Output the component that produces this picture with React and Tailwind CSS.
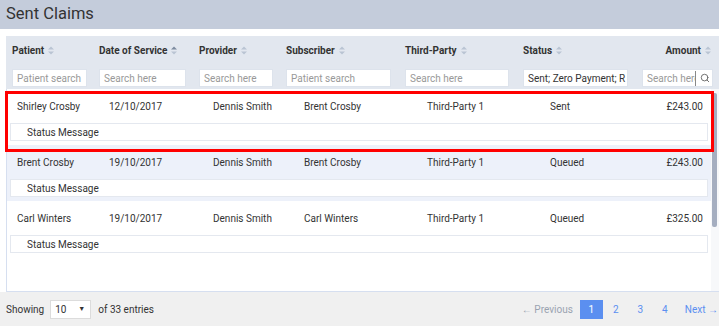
import { Search } from "lucide-react";

const SortIcon = ({ active = false }) => (
  <svg width="6" height="9" viewBox="0 0 6 9" className="ml-[4px] inline-block">
    <path d="M0 3.5 L3 0.5 L6 3.5 Z" fill={active ? "#7d8ba0" : "#b9c4d3"} />
    <path d="M0 5.5 L3 8.5 L6 5.5 Z" fill="#b9c4d3" />
  </svg>
);

const columns = [
  { label: "Patient", w: "w-[87px]", input: "w-[75px]", placeholder: "Patient search" },
  { label: "Date of Service", w: "w-[100px]", input: "w-[87px]", placeholder: "Search here", active: true },
  { label: "Provider", w: "w-[87px]", input: "w-[74px]", placeholder: "Search here" },
  { label: "Subscriber", w: "w-[119px]", input: "w-[105px]", placeholder: "Patient search" },
  { label: "Third-Party", w: "w-[118px]", input: "w-[104px]", placeholder: "Search here" },
  { label: "Status", w: "w-[119px]", input: "w-[105px]", value: "Sent; Zero Payment; R" },
];

const claims = [
  { patient: "Shirley Crosby", date: "12/10/2017", provider: "Dennis Smith", subscriber: "Brent Crosby", party: "Third-Party 1", status: "Sent", amount: "£243.00" },
  { patient: "Brent Crosby", date: "19/10/2017", provider: "Dennis Smith", subscriber: "Brent Crosby", party: "Third-Party 1", status: "Queued", amount: "£243.00", shaded: true },
  { patient: "Carl Winters", date: "19/10/2017", provider: "Dennis Smith", subscriber: "Carl Winters", party: "Third-Party 1", status: "Queued", amount: "£325.00" },
];

const ClaimRow = ({ c }) => (
  <div className={`h-[56px] pt-[10px] ${c.shaded ? "bg-[#edf1fa]" : "bg-white"}`}>
    <div className="flex h-[14px] items-center pl-[10px] pr-[8px]">
      <span className="w-[92px]">{c.patient}</span>
      <span className="w-[104px]">{c.date}</span>
      <span className="w-[91px]">{c.provider}</span>
      <span className="w-[123px]">{c.subscriber}</span>
      <span className="w-[123px]">{c.party}</span>
      <span className="w-[80px]">{c.status}</span>
      <span className="flex-1 text-right">{c.amount}</span>
    </div>
    <div className="mx-[3px] mt-[10px] flex h-[18px] items-center border border-[#e4e8ef] bg-white pl-[16px]">
      Status Message
    </div>
  </div>
);

const App = () => {
  return (
    <div
      className="relative h-[326px] w-[719px] overflow-hidden bg-white text-[10px] text-[#333]"
      style={{ fontFamily: "Roboto, 'Liberation Sans', sans-serif" }}
    >
      {/* Title bar */}
      <div className="flex h-[29px] items-center bg-[#c4ccdb] px-[6px]">
        <h1 className="text-[16.5px] leading-none text-[#333]">Sent Claims</h1>
      </div>

      <div className="flex h-[263px] flex-col pl-[6px] pt-[7px]">
        {/* Column headers + filters */}
        <div className="h-[53px] bg-[#e2e7ef] pl-[6px] pt-[7px]">
          <div className="flex h-[14px] items-center font-bold">
            {columns.map((col) => (
              <div key={col.label} className={`${col.w} flex items-center`}>
                {col.label}
                <SortIcon active={col.active} />
              </div>
            ))}
            <div className="flex w-[69px] items-center justify-end">
              Amount
              <SortIcon />
            </div>
          </div>
          <div className="mt-[12px] flex h-[18px]">
            {columns.map((col) => (
              <div key={col.label} className={col.w}>
                <div className={`${col.input} flex h-[18px] items-center overflow-hidden whitespace-nowrap border border-[#dde3ec] bg-white px-[4px]`}>
                  {col.value ? (
                    <span className="text-[#333]">{col.value}</span>
                  ) : (
                    <span className="text-[#999]">{col.placeholder}</span>
                  )}
                </div>
              </div>
            ))}
            <div className="flex h-[18px] w-[71px] items-center border border-[#dde3ec] bg-white">
              <span className="w-[53px] overflow-hidden whitespace-nowrap border-r border-[#888] pl-[4px] text-[#999]">Search here</span>
              <Search size={10} strokeWidth={2.2} className="ml-[4px] text-[#666]" />
            </div>
          </div>
        </div>

        {/* Rows */}
        <div className="flex flex-1 border-b border-l border-[#d6dff0]">
          <div className="flex-1">
            {claims.map((c) => (
              <ClaimRow key={c.patient} c={c} />
            ))}
          </div>
          <div className="w-[8px] bg-[#f7f8fa] pl-[1px] pt-[4px]">
            <div className="h-[134px] w-[5px] rounded-[2px] bg-[#a5aec0]" />
          </div>
        </div>
      </div>

      {/* Footer */}
      <div className="flex h-[34px] items-center bg-[#f0f0f0] pl-[6px] pr-[1px]">
        <span>Showing</span>
        <div className="ml-[6px] flex h-[19px] w-[41px] items-center justify-between border border-[#dcdcdc] bg-white pl-[4px] pr-[5px]">
          <span>10</span>
          <span className="text-[7px]">▼</span>
        </div>
        <span className="ml-[7px]">of 33 entries</span>
        <div className="ml-auto flex items-center">
          <span className="text-[#9aa3b0]">← Previous</span>
          <span className="ml-[7px] flex h-[19px] w-[23px] items-center justify-center bg-[#5b8ff0] text-white">1</span>
          <span className="ml-[1px] flex h-[19px] w-[24px] items-center justify-center text-[#5b8ff0]">2</span>
          <span className="flex h-[19px] w-[25px] items-center justify-center text-[#5b8ff0]">3</span>
          <span className="flex h-[19px] w-[24px] items-center justify-center text-[#5b8ff0]">4</span>
          <span className="ml-[8px] text-[#5b8ff0]">Next →</span>
        </div>
      </div>

      {/* Highlight annotation */}
      <div className="pointer-events-none absolute left-[5px] top-[91px] h-[61px] w-[709px] border-[3px] border-[#ff0000]" />
    </div>
  );
};

export default App;
